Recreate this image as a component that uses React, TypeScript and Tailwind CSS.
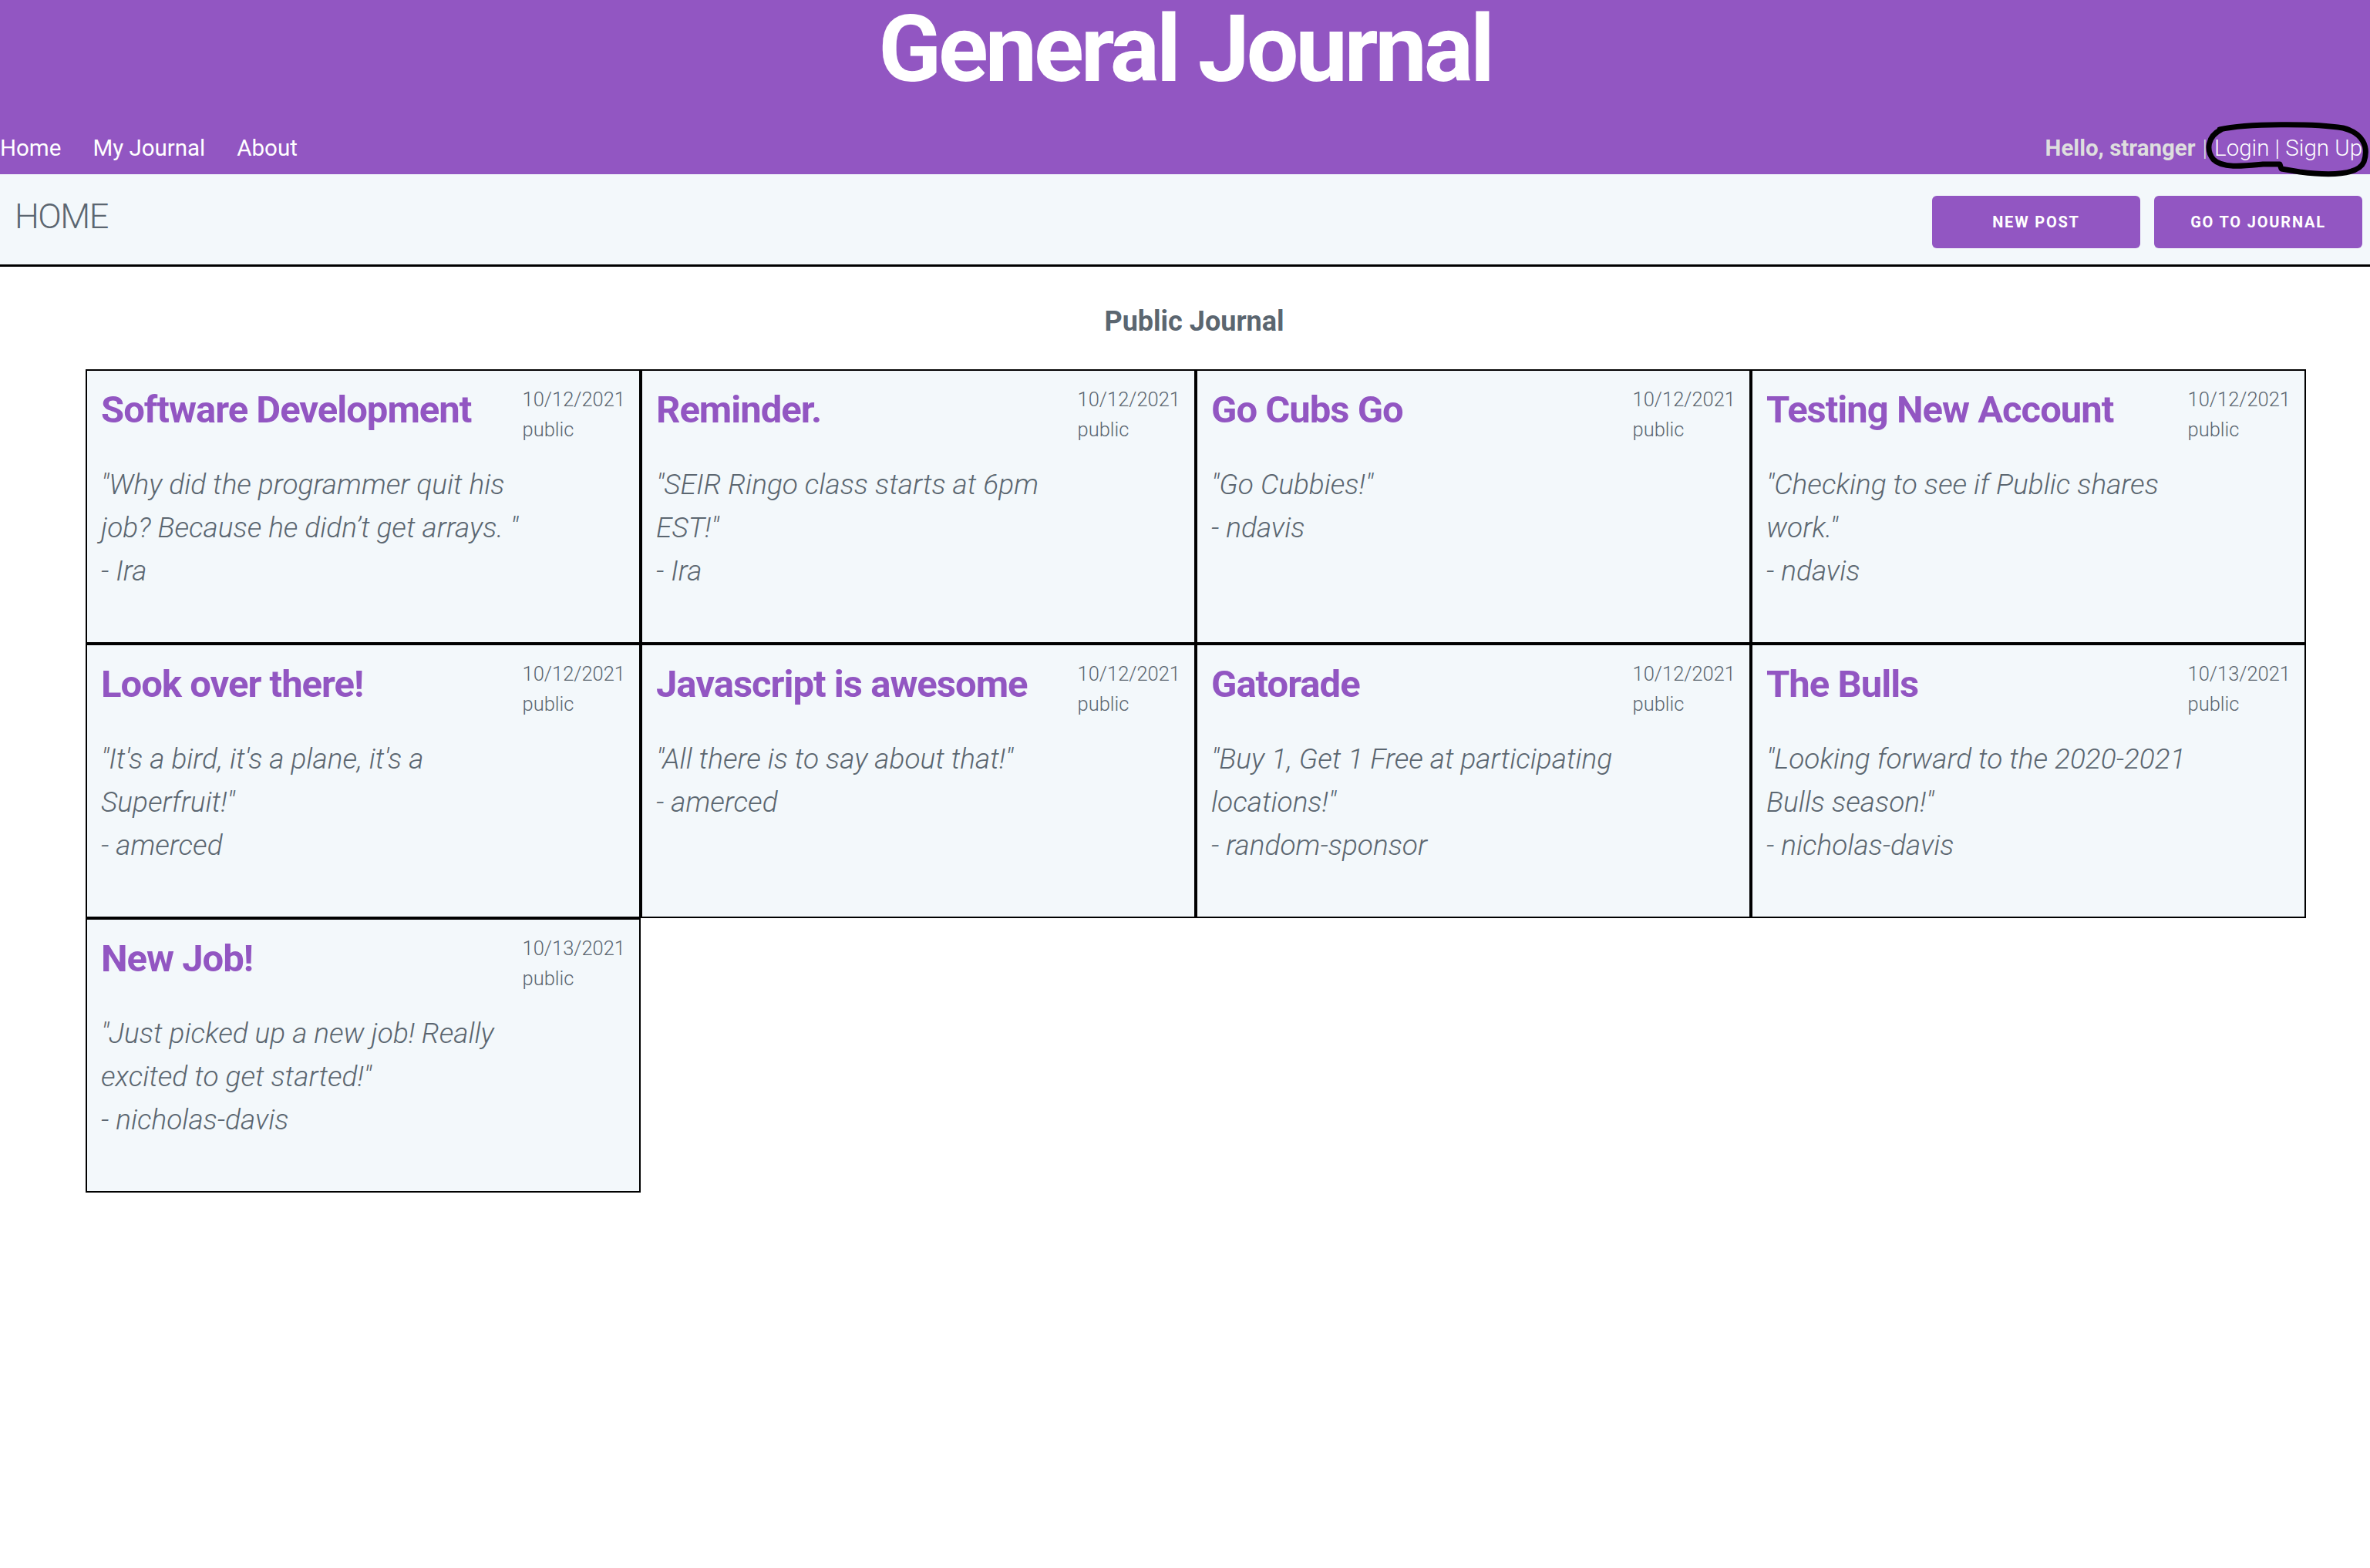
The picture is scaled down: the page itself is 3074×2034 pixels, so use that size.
import React from "react";

type Post = {
  title: string;
  date: string;
  body: string;
  author: string;
};

const posts: Post[] = [
  { title: "Software Development", date: "10/12/2021", body: "\"Why did the programmer quit his job? Because he didn’t get arrays. \"", author: "Ira" },
  { title: "Reminder.", date: "10/12/2021", body: "\"SEIR Ringo class starts at 6pm EST!\"", author: "Ira" },
  { title: "Go Cubs Go", date: "10/12/2021", body: "\"Go Cubbies!\"", author: "ndavis" },
  { title: "Testing New Account", date: "10/12/2021", body: "\"Checking to see if Public shares work.\"", author: "ndavis" },
  { title: "Look over there!", date: "10/12/2021", body: "\"It's a bird, it's a plane, it's a Superfruit!\"", author: "amerced" },
  { title: "Javascript is awesome", date: "10/12/2021", body: "\"All there is to say about that!\"", author: "amerced" },
  { title: "Gatorade", date: "10/12/2021", body: "\"Buy 1, Get 1 Free at participating locations!\"", author: "random-sponsor" },
  { title: "The Bulls", date: "10/13/2021", body: "\"Looking forward to the 2020-2021 Bulls season!\"", author: "nicholas-davis" },
  { title: "New Job!", date: "10/13/2021", body: "\"Just picked up a new job! Really excited to get started!\"", author: "nicholas-davis" },
];

function PostCard({ post }: { post: Post }) {
  return (
    <div className="h-[356px] border-2 border-black bg-[#f3f8fb] flex pt-[18px] pl-[18px] pr-[18px]">
      <div className="flex-1 min-w-0">
        <h3 className="mt-[4px] text-[49px] leading-[57.6px] font-bold text-[#9256c2] tracking-[-1px]">
          {post.title}
        </h3>
        <div className="mt-[40px] text-[37px] leading-[56px] italic font-light text-[#5b6670]">
          <p>{post.body}</p>
          <p>- {post.author}</p>
        </div>
      </div>
      <div className="text-[25.5px] leading-[39px] font-light text-[#5b6670]">
        <p>{post.date}</p>
        <p>public</p>
      </div>
    </div>
  );
}

export default function App() {
  return (
    <div className="min-h-[2034px] bg-white font-['Roboto',sans-serif]">
      {/* top bar */}
      <header className="h-[226px] bg-[#9256c2] flex flex-col">
        <h1 className="mt-[4px] text-center text-[120px] leading-[120px] font-bold text-white tracking-[-4px]">
          General Journal
        </h1>
        <nav className="mt-auto pb-[13px] flex justify-between items-center text-[29.5px] leading-[42px]">
          <div className="flex gap-[41px] text-white">
            <a>Home</a>
            <a>My Journal</a>
            <a>About</a>
          </div>
          <div className="relative pr-[10px] flex items-center">
            <span className="font-bold text-[#dedede]">Hello, stranger</span>
            <span className="mx-[9px] font-light text-[#dedede]">|</span>
            <span className="font-light text-white">Login | Sign Up</span>
            <svg
              className="absolute right-[2px] top-[-16px] w-[219px] h-[80px] pointer-events-none"
              viewBox="0 0 219 80"
              fill="none"
            >
              <path
                d="M26 13 C60 5, 150 5, 186 11 C211 17, 220 35, 213 55 C206 72, 170 73, 130 68 L106 64 L104 58 L82 58 C60 60, 30 64, 18 52 C8 40, 10 22, 28 13"
                stroke="black"
                strokeWidth="7"
                strokeLinecap="round"
                strokeLinejoin="round"
              />
            </svg>
          </div>
        </nav>
      </header>

      {/* page title bar */}
      <div className="h-[120px] bg-[#f3f8fb] border-b-[3px] border-black flex justify-between items-start">
        <h2 className="mt-[27px] ml-[19px] text-[45px] leading-[55px] font-light tracking-[-1.5px] text-[#5b6670]">HOME</h2>
        <div className="mt-[28px] mr-[10px] flex gap-[18px]">
          <button className="w-[270px] h-[68px] rounded-[6px] bg-[#9256c2] text-white text-[20px] font-bold tracking-[1.8px] uppercase">
            New Post
          </button>
          <button className="w-[270px] h-[68px] rounded-[6px] bg-[#9256c2] text-white text-[20px] font-bold tracking-[1.8px] uppercase">
            Go to Journal
          </button>
        </div>
      </div>

      <main>
        <h2 className="mt-[50px] pl-[24px] text-center text-[36px] leading-[43px] font-bold text-[#5b6670]">Public Journal</h2>
        <div className="mt-[40px] ml-[111px] w-[2880px] grid grid-cols-4">
          {posts.map((p) => (
            <PostCard key={p.title} post={p} />
          ))}
        </div>
      </main>
    </div>
  );
}
